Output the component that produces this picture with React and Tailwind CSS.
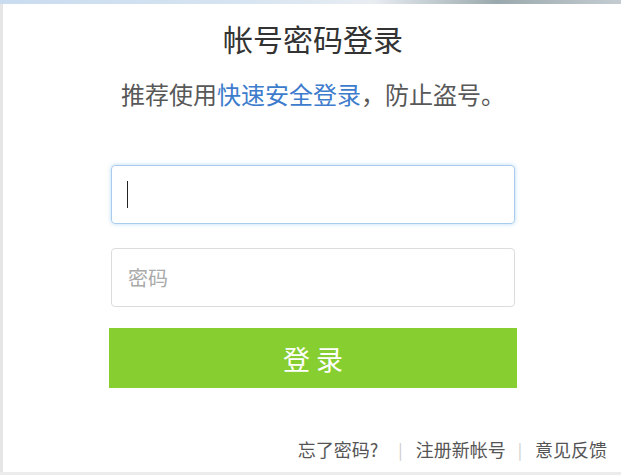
export default function App() {
  return (
    <div className="w-[621px] h-[475px] overflow-hidden bg-white flex flex-col font-['Noto_Sans_CJK_SC','Noto_Sans',sans-serif]">
      <div className="h-[4px] shrink-0 bg-[linear-gradient(90deg,#c9dcef_0%,#d7e4f1_40%,#e8edf2_60%,#9aa9ad_80%,#c4ccd2_100%)]" />
      <div className="flex-1 flex flex-col border-l-[3px] border-[#e6e6e6] pl-[2px]">
        <div className="flex flex-col items-center">
          <h1 className="mt-[14px] text-[30px] leading-[40px] text-[#333]">帐号密码登录</h1>
          <p className="mt-[20px] text-[24px] leading-[32px] text-[#585858]">
            推荐使用<a href="#" className="text-[#3d7ccc]">快速安全登录</a>，防止盗号。
          </p>

          <div className="mt-[55px] w-[404px] h-[59px] rounded-[4px] border border-[#a8ccee] shadow-[0_0_4px_rgba(102,175,233,0.45)] flex items-center pl-[15px]">
            <span className="w-[1px] h-[27px] bg-[#222]" />
          </div>

          <div className="mt-[24px] w-[404px] h-[59px] rounded-[4px] border border-[#dcdcdc] flex items-center pl-[16px]">
            <span className="text-[20px] text-[#aaa]">密码</span>
          </div>

          <button className="mt-[21px] w-[408px] h-[60px] bg-[#87ce30] text-white text-[27px] leading-none">
            登 录
          </button>
        </div>

        <div className="mt-[49px] flex justify-end items-center pr-[14px] text-[18px] leading-[24px] text-[#555]">
          <a href="#">忘了密码?</a>
          <span className="ml-[20px] mr-[13px] text-[#ccc] text-[16px]">|</span>
          <a href="#">注册新帐号</a>
          <span className="ml-[12px] mr-[13px] text-[#ccc] text-[16px]">|</span>
          <a href="#">意见反馈</a>
        </div>
      </div>
      <div className="h-[3px] shrink-0 bg-[#ececec]" />
    </div>
  );
}
